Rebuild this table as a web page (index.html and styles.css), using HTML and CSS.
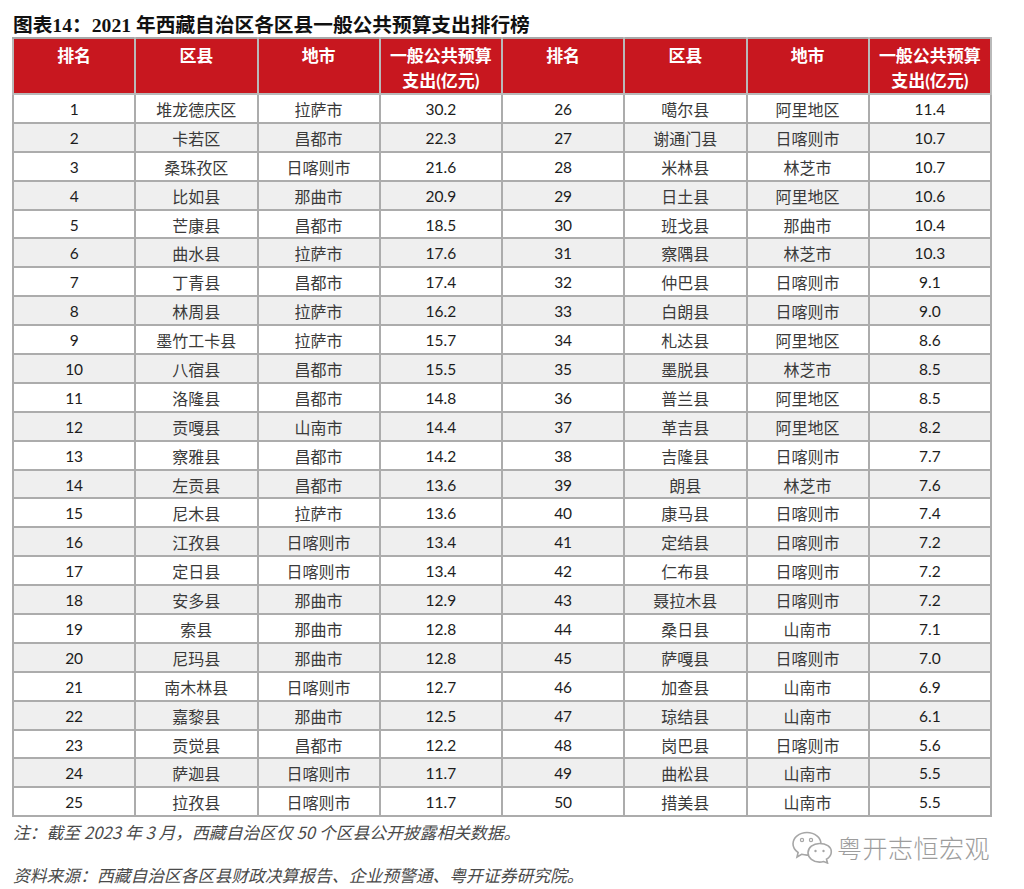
FILE: index.html
```html
<!DOCTYPE html>
<html lang="zh-CN">
<head>
<meta charset="utf-8">
<title>图表14</title>
<link rel="stylesheet" href="styles.css">
</head>
<body>
<div class="page">
  <h1 class="title">图表14：2021 年西藏自治区各区县一般公共预算支出排行榜</h1>
  <table class="rank">
    <thead>
      <tr>
        <th>排名</th><th>区县</th><th>地市</th><th>一般公共预算<br>支出(亿元)</th>
        <th>排名</th><th>区县</th><th>地市</th><th>一般公共预算<br>支出(亿元)</th>
      </tr>
    </thead>
    <tbody>
      <tr><td class="n">1</td><td>堆龙德庆区</td><td>拉萨市</td><td class="n">30.2</td><td class="n">26</td><td>噶尔县</td><td>阿里地区</td><td class="n">11.4</td></tr>
      <tr><td class="n">2</td><td>卡若区</td><td>昌都市</td><td class="n">22.3</td><td class="n">27</td><td>谢通门县</td><td>日喀则市</td><td class="n">10.7</td></tr>
      <tr><td class="n">3</td><td>桑珠孜区</td><td>日喀则市</td><td class="n">21.6</td><td class="n">28</td><td>米林县</td><td>林芝市</td><td class="n">10.7</td></tr>
      <tr><td class="n">4</td><td>比如县</td><td>那曲市</td><td class="n">20.9</td><td class="n">29</td><td>日土县</td><td>阿里地区</td><td class="n">10.6</td></tr>
      <tr><td class="n">5</td><td>芒康县</td><td>昌都市</td><td class="n">18.5</td><td class="n">30</td><td>班戈县</td><td>那曲市</td><td class="n">10.4</td></tr>
      <tr><td class="n">6</td><td>曲水县</td><td>拉萨市</td><td class="n">17.6</td><td class="n">31</td><td>察隅县</td><td>林芝市</td><td class="n">10.3</td></tr>
      <tr><td class="n">7</td><td>丁青县</td><td>昌都市</td><td class="n">17.4</td><td class="n">32</td><td>仲巴县</td><td>日喀则市</td><td class="n">9.1</td></tr>
      <tr><td class="n">8</td><td>林周县</td><td>拉萨市</td><td class="n">16.2</td><td class="n">33</td><td>白朗县</td><td>日喀则市</td><td class="n">9.0</td></tr>
      <tr><td class="n">9</td><td>墨竹工卡县</td><td>拉萨市</td><td class="n">15.7</td><td class="n">34</td><td>札达县</td><td>阿里地区</td><td class="n">8.6</td></tr>
      <tr><td class="n">10</td><td>八宿县</td><td>昌都市</td><td class="n">15.5</td><td class="n">35</td><td>墨脱县</td><td>林芝市</td><td class="n">8.5</td></tr>
      <tr><td class="n">11</td><td>洛隆县</td><td>昌都市</td><td class="n">14.8</td><td class="n">36</td><td>普兰县</td><td>阿里地区</td><td class="n">8.5</td></tr>
      <tr><td class="n">12</td><td>贡嘎县</td><td>山南市</td><td class="n">14.4</td><td class="n">37</td><td>革吉县</td><td>阿里地区</td><td class="n">8.2</td></tr>
      <tr><td class="n">13</td><td>察雅县</td><td>昌都市</td><td class="n">14.2</td><td class="n">38</td><td>吉隆县</td><td>日喀则市</td><td class="n">7.7</td></tr>
      <tr><td class="n">14</td><td>左贡县</td><td>昌都市</td><td class="n">13.6</td><td class="n">39</td><td>朗县</td><td>林芝市</td><td class="n">7.6</td></tr>
      <tr><td class="n">15</td><td>尼木县</td><td>拉萨市</td><td class="n">13.6</td><td class="n">40</td><td>康马县</td><td>日喀则市</td><td class="n">7.4</td></tr>
      <tr><td class="n">16</td><td>江孜县</td><td>日喀则市</td><td class="n">13.4</td><td class="n">41</td><td>定结县</td><td>日喀则市</td><td class="n">7.2</td></tr>
      <tr><td class="n">17</td><td>定日县</td><td>日喀则市</td><td class="n">13.4</td><td class="n">42</td><td>仁布县</td><td>日喀则市</td><td class="n">7.2</td></tr>
      <tr><td class="n">18</td><td>安多县</td><td>那曲市</td><td class="n">12.9</td><td class="n">43</td><td>聂拉木县</td><td>日喀则市</td><td class="n">7.2</td></tr>
      <tr><td class="n">19</td><td>索县</td><td>那曲市</td><td class="n">12.8</td><td class="n">44</td><td>桑日县</td><td>山南市</td><td class="n">7.1</td></tr>
      <tr><td class="n">20</td><td>尼玛县</td><td>那曲市</td><td class="n">12.8</td><td class="n">45</td><td>萨嘎县</td><td>日喀则市</td><td class="n">7.0</td></tr>
      <tr><td class="n">21</td><td>南木林县</td><td>日喀则市</td><td class="n">12.7</td><td class="n">46</td><td>加查县</td><td>山南市</td><td class="n">6.9</td></tr>
      <tr><td class="n">22</td><td>嘉黎县</td><td>那曲市</td><td class="n">12.5</td><td class="n">47</td><td>琼结县</td><td>山南市</td><td class="n">6.1</td></tr>
      <tr><td class="n">23</td><td>贡觉县</td><td>昌都市</td><td class="n">12.2</td><td class="n">48</td><td>岗巴县</td><td>日喀则市</td><td class="n">5.6</td></tr>
      <tr><td class="n">24</td><td>萨迦县</td><td>日喀则市</td><td class="n">11.7</td><td class="n">49</td><td>曲松县</td><td>山南市</td><td class="n">5.5</td></tr>
      <tr><td class="n">25</td><td>拉孜县</td><td>日喀则市</td><td class="n">11.7</td><td class="n">50</td><td>措美县</td><td>山南市</td><td class="n">5.5</td></tr>
    </tbody>
  </table>
  <div class="foot">
    <div class="notes">
      <p class="note">注：截至 2023 年 3 月，西藏自治区仅 50 个区县公开披露相关数据。</p>
      <p class="note">资料来源：西藏自治区各区县财政决算报告、企业预警通、粤开证券研究院。</p>
    </div>
    <div class="mark">
      <svg class="wx" width="42" height="34" viewBox="0 0 42 34" aria-hidden="true">
        <path d="M16 2.5C8.3 2.5 2 7.6 2 13.8c0 3.5 2 6.6 5.1 8.7L6 27l4.6-2.7c1.7.5 3.5.8 5.4.8 7.7 0 14-5.1 14-11.3S23.7 2.5 16 2.5z" fill="none" stroke="#a6a6a6" stroke-width="1.6"/>
        <circle cx="11" cy="10" r="1.6" fill="none" stroke="#a6a6a6" stroke-width="1.2"/>
        <circle cx="20" cy="10" r="1.6" fill="none" stroke="#a6a6a6" stroke-width="1.2"/>
        <path d="M28.5 13.5c-6.4 0-11.5 4.2-11.5 9.3s5.1 9.3 11.5 9.3c1.4 0 2.8-.2 4.1-.6L36.5 33l-1-3.8c2.9-1.7 4.8-4.5 4.8-7.5 0-5.1-5.3-8.2-11.8-8.2z" fill="#fff" stroke="#a6a6a6" stroke-width="1.6"/>
        <circle cx="24.5" cy="21" r="1.2" fill="#a6a6a6"/>
        <circle cx="32.5" cy="21" r="1.2" fill="#a6a6a6"/>
      </svg>
      <span class="mark-text">粤开志恒宏观</span>
    </div>
  </div>
</div>
</body>
</html>
```

FILE: styles.css
```css
html, body {
  margin: 0;
  padding: 0;
  background: #ffffff;
}

.page {
  width: 980px;
  padding: 14px 0 0 12px;
}

.title {
  margin: 0 0 1px 1px;
  font-family: "Liberation Serif", "Noto Sans CJK SC", serif;
  font-size: 19.7px;
  font-weight: 700;
  line-height: 22px;
  color: #111111;
  white-space: nowrap;
}

.rank {
  width: 980px;
  table-layout: fixed;
  border-collapse: collapse;
  border: 2px solid #a8a8a8;
}

.rank th {
  height: 50px;
  padding: 4px 0 0;
  vertical-align: top;
  background: #c8171f;
  color: #ffffff;
  font-family: "Lato", "Noto Sans CJK SC", sans-serif;
  font-size: 17px;
  font-weight: 700;
  line-height: 25px;
  text-align: center;
  border: 2px solid #b9b9b9;
  border-top-color: #a8a8a8;
}

.rank td {
  height: 28.9px;
  padding: 1px 0 0;
  box-sizing: border-box;
  text-align: center;
  vertical-align: middle;
  font-family: "Noto Sans CJK SC", sans-serif;
  font-size: 16px;
  line-height: 20px;
  color: #3a3a3a;
  border: 2px solid #acacac;
}

.rank td.n {
  font-family: "Lato", "Open Sans", sans-serif;
  font-size: 15.5px;
  color: #1c1c1c;
}

.rank tbody tr:nth-child(even) td {
  background: #efefef;
}

.foot {
  display: flex;
  justify-content: space-between;
  align-items: flex-start;
  padding-top: 4px;
}

.notes {
  display: flex;
  flex-direction: column;
  gap: 21px;
}

.note {
  margin: 0 0 0 1px;
  font-family: "Noto Sans CJK SC", sans-serif;
  font-style: italic;
  font-size: 16.8px;
  line-height: 22px;
  color: #4a4a4a;
  white-space: nowrap;
}

.mark {
  display: flex;
  align-items: center;
  gap: 4px;
  margin-top: 9px;
  margin-right: 2px;
}

.wx {
  display: block;
}

.mark-text {
  font-family: "Noto Sans CJK SC", sans-serif;
  font-weight: 300;
  font-size: 25px;
  line-height: 30px;
  color: #9d9d9d;
  letter-spacing: 0.5px;
}
```
